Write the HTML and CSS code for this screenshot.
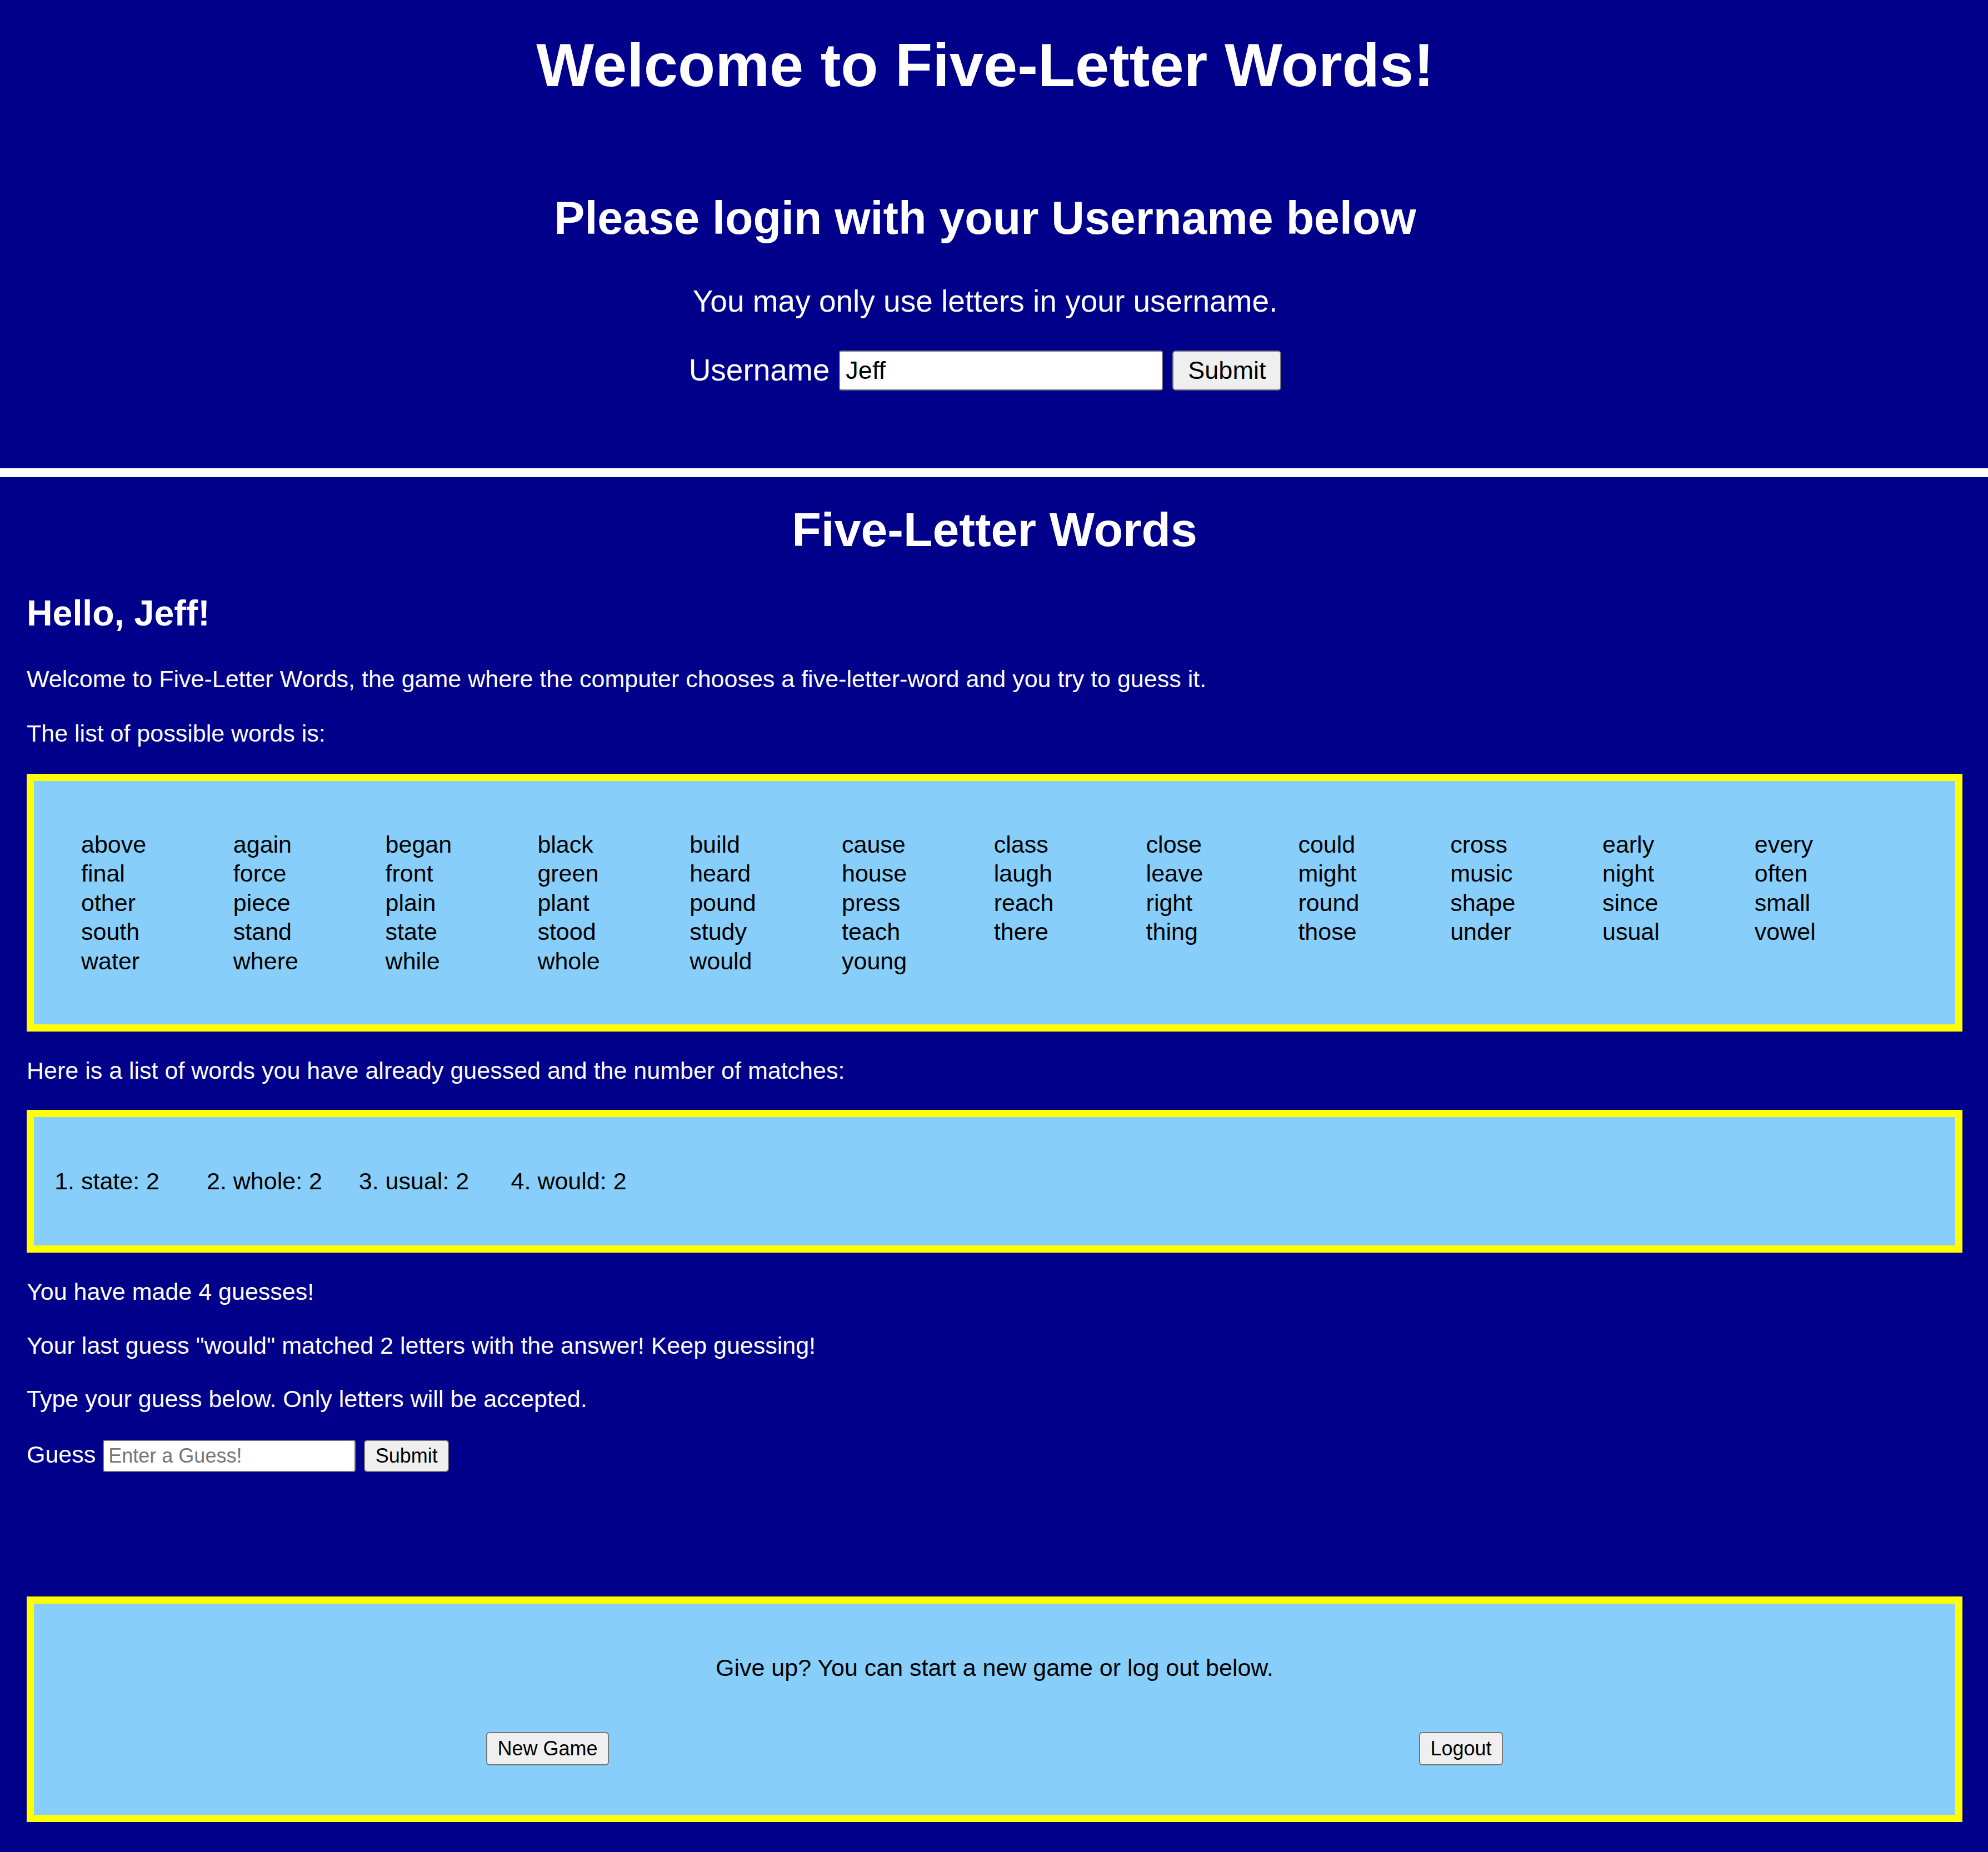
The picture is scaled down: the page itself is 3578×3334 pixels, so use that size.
FILE: index.html
```html
<!DOCTYPE html>
<html lang="en">
<head>
<meta charset="utf-8">
<title>Five-Letter Words</title>
<link rel="stylesheet" href="styles.css">
</head>
<body>
<header class="login">
  <h1 class="login-title">Welcome to Five-Letter Words!</h1>
  <h2 class="login-sub">Please login with your Username below</h2>
  <p class="login-note">You may only use letters in your username.</p>
  <form class="login-form">
    <label class="login-label" for="username">Username</label>
    <input class="login-input" id="username" type="text" value="Jeff">
    <button class="login-btn" type="button">Submit</button>
  </form>
</header>

<main class="game">
  <h1 class="game-title">Five-Letter Words</h1>
  <h2 class="hello">Hello, Jeff!</h2>
  <p class="txt first">Welcome to Five-Letter Words, the game where the computer chooses a five-letter-word and you try to guess it.</p>
  <p class="txt g46">The list of possible words is:</p>

  <section class="box words-box">
    <ul class="words">
      <li>above</li><li>again</li><li>began</li><li>black</li><li>build</li><li>cause</li><li>class</li><li>close</li><li>could</li><li>cross</li><li>early</li><li>every</li>
      <li>final</li><li>force</li><li>front</li><li>green</li><li>heard</li><li>house</li><li>laugh</li><li>leave</li><li>might</li><li>music</li><li>night</li><li>often</li>
      <li>other</li><li>piece</li><li>plain</li><li>plant</li><li>pound</li><li>press</li><li>reach</li><li>right</li><li>round</li><li>shape</li><li>since</li><li>small</li>
      <li>south</li><li>stand</li><li>state</li><li>stood</li><li>study</li><li>teach</li><li>there</li><li>thing</li><li>those</li><li>under</li><li>usual</li><li>vowel</li>
      <li>water</li><li>where</li><li>while</li><li>whole</li><li>would</li><li>young</li>
    </ul>
  </section>

  <p class="txt g44">Here is a list of words you have already guessed and the number of matches:</p>

  <section class="box guesses-box">
    <ol class="guesses">
      <li>state: 2</li>
      <li>whole: 2</li>
      <li>usual: 2</li>
      <li>would: 2</li>
    </ol>
  </section>

  <p class="txt g44">You have made 4 guesses!</p>
  <p class="txt g44">Your last guess "would" matched 2 letters with the answer! Keep guessing!</p>
  <p class="txt g44">Type your guess below. Only letters will be accepted.</p>

  <form class="guess-form">
    <label class="guess-label" for="guess">Guess</label>
    <input class="guess-input" id="guess" type="text" placeholder="Enter a Guess!">
    <button class="btn" type="button">Submit</button>
  </form>

  <section class="box end-box">
    <p class="end-text">Give up? You can start a new game or log out below.</p>
    <div class="end-actions">
      <button class="btn" type="button">New Game</button>
      <button class="btn" type="button">Logout</button>
    </div>
  </section>
</main>
</body>
</html>
```

FILE: styles.css
```css
* {
  box-sizing: border-box;
}

html, body {
  margin: 0;
  padding: 0;
}

body {
  background: #00008b;
  color: #ffffff;
  font-family: "Liberation Sans", Arial, sans-serif;
}

h1, h2, p, ul, ol, form {
  margin: 0;
}

/* ---------- login header ---------- */
.login {
  padding: 54px 32px 140px 0;
  border-bottom: 16px solid #ffffff;
  text-align: center;
}

.login-title {
  font-size: 110px;
  line-height: 1.15;
  font-weight: bold;
}

.login-sub {
  margin-top: 165px;
  font-size: 82.6px;
  line-height: 1.15;
  font-weight: bold;
}

.login-note {
  margin-top: 70.5px;
  font-size: 55px;
  line-height: 1.15;
}

.login-form {
  margin-top: 56.5px;
  height: 72px;
  display: flex;
  justify-content: center;
  align-items: center;
}

.login-label {
  font-size: 55px;
  line-height: 1.15;
  margin-right: 17px;
}

.login-input {
  width: 583px;
  height: 72px;
  font-family: "Liberation Sans", Arial, sans-serif;
  font-size: 45px;
  color: #000000;
  background: #ffffff;
  border: 2px solid #767676;
  border-radius: 4px;
  padding: 0 10px;
  margin-right: 17px;
}

.login-btn {
  width: 196px;
  height: 72px;
  font-family: "Liberation Sans", Arial, sans-serif;
  font-size: 45px;
  color: #000000;
  background: #efefef;
  border: 2px solid #767676;
  border-radius: 6px;
  padding: 0;
}

/* ---------- game ---------- */
.game {
  padding: 45px 46px 54px 48px;
}

.game-title {
  font-size: 86px;
  line-height: 1.15;
  font-weight: bold;
  text-align: center;
}

.hello {
  margin-top: 64px;
  font-size: 64.5px;
  line-height: 1.15;
  font-weight: bold;
}

.txt {
  font-size: 43px;
  line-height: 52.5px;
}

.txt.first {
  margin-top: 55px;
}

.txt.g46 {
  margin-top: 46px;
}

.txt.g44 {
  margin-top: 44px;
}

.box {
  background: #87cefa;
  border: 13px solid #ffff00;
  color: #000000;
  font-size: 43px;
  line-height: 52.5px;
  padding: 88px 85px;
}

.words-box {
  margin-top: 46px;
}

.words {
  list-style: none;
  padding: 0;
  display: grid;
  grid-template-columns: repeat(12, 273.8px);
}

.guesses-box {
  margin-top: 44px;
  padding-top: 89.5px;
  padding-bottom: 89.5px;
}

.guesses {
  padding: 0;
  display: grid;
  grid-template-columns: repeat(12, 273.8px);
  list-style: decimal outside;
}

.guesses li {
  display: list-item;
}

.guess-form {
  margin-top: 47.5px;
  display: flex;
  align-items: baseline;
}

.guess-label {
  font-size: 43px;
  line-height: 52.5px;
  margin-right: 13px;
}

.guess-input {
  width: 455px;
  height: 58px;
  font-family: "Liberation Sans", Arial, sans-serif;
  font-size: 36px;
  color: #000000;
  background: #ffffff;
  border: 2px solid #767676;
  border-radius: 4px;
  padding: 0 8px;
  margin-right: 15px;
}

.guess-input::placeholder {
  color: #757575;
}

.btn {
  height: 58px;
  font-family: "Liberation Sans", Arial, sans-serif;
  font-size: 36px;
  color: #000000;
  background: #efefef;
  border: 2px solid #767676;
  border-radius: 6px;
  padding: 0 18.5px;
}

.end-box {
  margin-top: 224px;
  padding-top: 89px;
  padding-bottom: 89px;
}

.end-text {
  text-align: center;
}

.end-actions {
  margin-top: 89.5px;
  display: flex;
  justify-content: space-around;
}

.end-actions .btn {
  height: 60px;
}
```
